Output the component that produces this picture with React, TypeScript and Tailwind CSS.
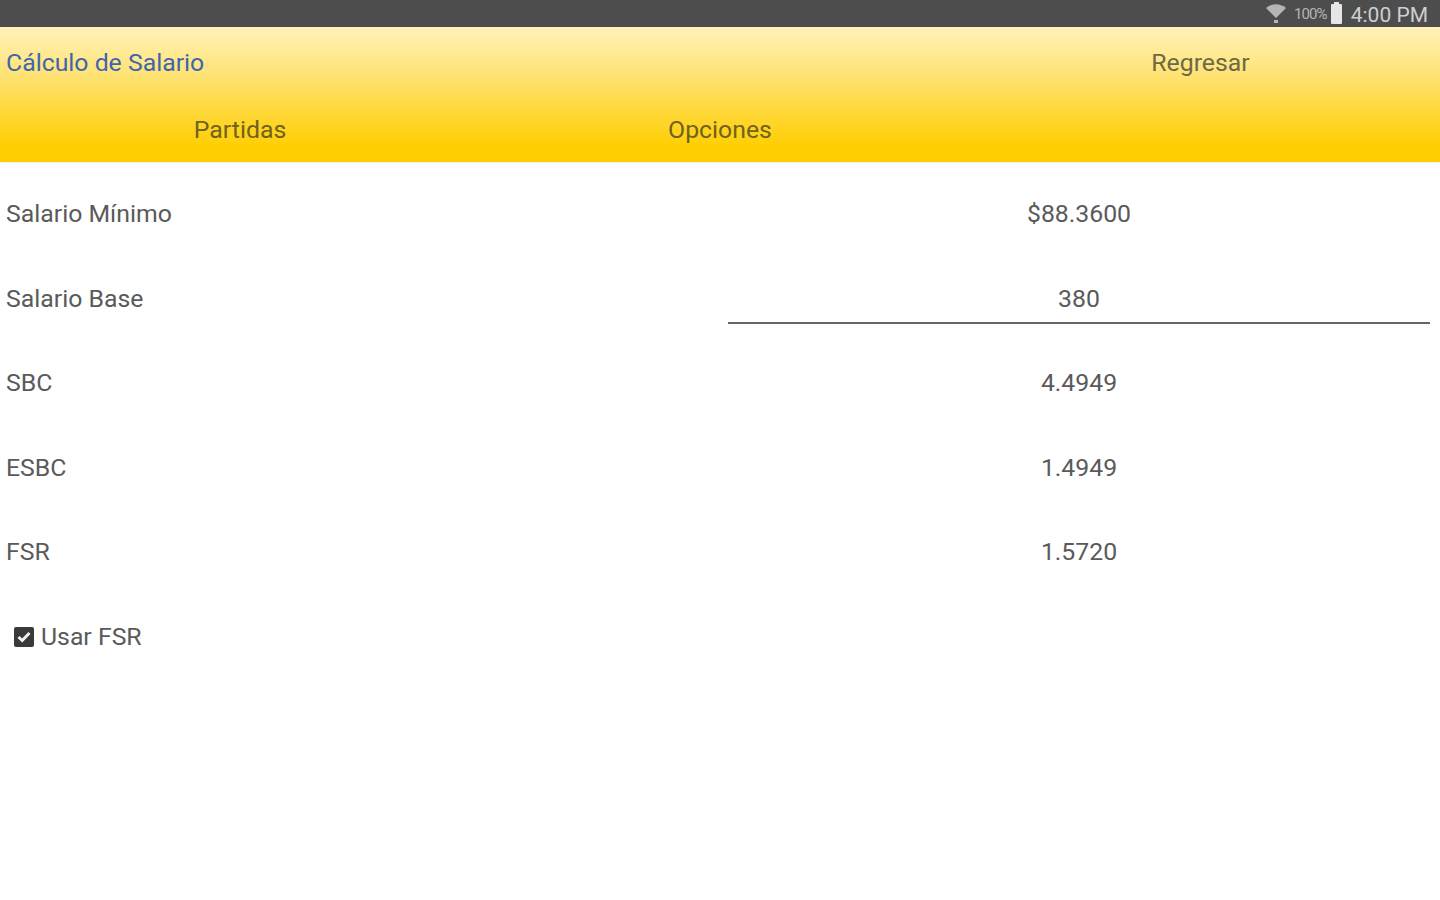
import React from "react";

const font = "font-['Roboto',sans-serif]";

function Row({ label, value, underline }: { label: string; value: string; underline?: boolean }) {
  return (
    <div className="flex h-[84.5px] items-center pt-[2px]">
      <div className="w-[728px] pl-[6px] text-[#5a5a5a]">{label}</div>
      <div className="relative flex h-full w-[702px] items-center justify-center text-[#5a5a5a]">
        <span>{value}</span>
        {underline && <div className="absolute bottom-[17px] left-0 right-0 h-[2px] bg-[#666666]" />}
      </div>
    </div>
  );
}

export default function App() {
  return (
    <div className={`${font} h-[900px] w-[1440px] overflow-hidden bg-white text-[24.8px] leading-none`}>
      <div className="flex h-[27px] items-center justify-end bg-[#4d4d4d] pr-[12px] text-[#cfcfcf]">
        <svg width="22" height="20" viewBox="0 0 22 20" className="mr-[7px] mt-[1px]" fill="none">
          <path d="M1 4 C7 -1 15 -1 21 4 L11 14 Z" fill="#b5b5b5" />
          <path d="M9 16h4v3H9z" fill="#b5b5b5" />
        </svg>
        <span className="mr-[4px] mt-[2px] text-[15px] tracking-[-0.9px] text-[#b5b5b5]">100%</span>
        <div className="relative mr-[9px] mt-[1px] h-[20px] w-[11px] rounded-[1px] bg-[#e6e6e6]">
          <div className="absolute left-[3px] top-[-2px] h-[2px] w-[5px] bg-[#e6e6e6]" />
        </div>
        <span className="mt-[4px] text-[21px]">4:00 PM</span>
      </div>
      <div className="h-[135px] bg-[linear-gradient(180deg,#fff2b8_0%,#ffe47c_32%,#ffd93f_60%,#ffce00_90%,#ffcc00_100%)] shadow-[0_1px_2px_rgba(0,0,0,0.08)]">
        <div className="flex h-[69px] items-center pt-[4px]">
          <div className="w-[960px] pl-[6px] text-[#3f66ad]">Cálculo de Salario</div>
          <div className="w-[480px] pl-[1px] text-center text-[#6b6a45]">Regresar</div>
        </div>
        <div className="flex h-[66px] items-center pt-[3px]">
          <div className="w-[480px] text-center text-[#6f6220]">Partidas</div>
          <div className="w-[480px] text-center text-[#6f6220]">Opciones</div>
        </div>
      </div>
      <div className="pt-[9.5px]">
        <Row label="Salario Mínimo" value="$88.3600" />
        <Row label="Salario Base" value="380" underline />
        <Row label="SBC" value="4.4949" />
        <Row label="ESBC" value="1.4949" />
        <Row label="FSR" value="1.5720" />
        <div className="flex h-[84.5px] items-center pl-[14px] pt-[2px] text-[#5a5a5a]">
          <div className="mr-[7px] flex h-[20px] w-[20px] items-center justify-center rounded-[2px] bg-[#3a3a3a]">
            <svg width="16" height="16" viewBox="0 0 16 16" fill="none">
              <path d="M2.5 8 L6.2 11.5 L13.5 4" stroke="#f2f2f2" strokeWidth="3" />
            </svg>
          </div>
          <span>Usar FSR</span>
        </div>
      </div>
    </div>
  );
}
